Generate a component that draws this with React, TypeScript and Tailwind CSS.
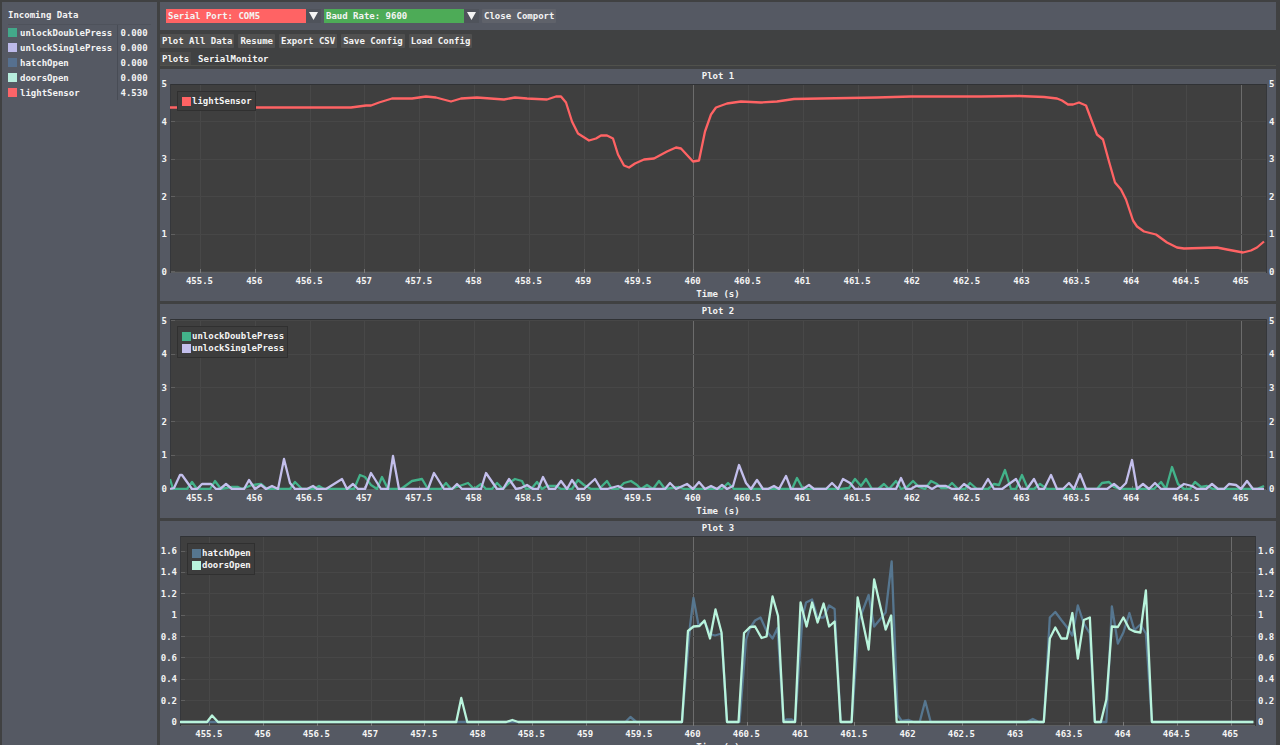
import { useState } from 'react';

type Series = { name: string; color: string; points: string };

type PlotProps = {
  title: string;
  height: number;
  start: number; // time at the left edge
  viewBox: string;
  zero: number; // y of value 0
  unit: number; // px per 1.0
  yTicks: number[];
  series: Series[];
  narrow?: boolean;
};

const GREEN = '#43b28a';
const LAVENDER = '#c3bfec';
const BLUE = '#56768f';
const MINT = '#b9f4dc';
const RED = '#ff6364';

const incoming = [
  { name: 'unlockDoublePress', value: '0.000', swatch: 'bg-[#43a88a]' },
  { name: 'unlockSinglePress', value: '0.000', swatch: 'bg-[#bdbaea]' },
  { name: 'hatchOpen', value: '0.000', swatch: 'bg-[#56708f]' },
  { name: 'doorsOpen', value: '0.000', swatch: 'bg-[#b7eddd]' },
  { name: 'lightSensor', value: '4.530', swatch: 'bg-[#fb6468]' },
];

const timeTicks = Array.from({ length: 20 }, (_, i) => 455.5 + i * 0.5);

const lightSensor =
  '0,24 181,24 196,22 201,22 209,19 222,15 242,15 256,13 266,14 281,18 291,15 307,14 334,16 345,14 357,15 377,16 386,13 391,13 396,19 402,38 408,50 419,57 426,55 431,52 437,52 443,55 448,71 454,82 459,84 465,80 474,76 484,75 497,68 506,64 511,65 523,78 529,77 535,48 541,31 546,24 557,20 571,18 591,19 607,18 624,15.5 651,15 707,14 741,13 811,13 849,12.5 874,13.5 887,15 892,17 898,21 903,21 909,19 916,22 922,38 927,51 933,56 939,78 945,99 951,106 956,116 963,137 967,143 974,148 986,151 997,159 1007,164 1014,165 1047,164 1057,166 1073,169 1081,167 1087,164 1094,158';

const unlockDouble =
  '0,159 3,169 17,169 22,162 27,169 40,169 45,161 51,169 62,167 68,167 72,169 82,165 91,164 97,169 120,169 125,162 132,169 144,169 149,166 154,169 184,169 190,155 195,157 201,165 207,169 212,157 218,169 231,169 242,161 252,159 258,169 271,169 276,163 281,169 298,163 304,169 311,164 316,169 322,169 327,163 333,169 339,163 345,159 352,161 356,169 362,168 367,162 372,169 377,166 386,166 391,169 402,169 408,160 414,165 421,169 429,169 437,161 442,169 448,169 454,163 461,161 467,165 471,169 477,165 483,169 489,161 495,169 509,167 514,169 552,169 558,163 564,169 622,169 627,158 633,169 671,169 679,168 685,159 691,166 696,159 702,169 708,169 714,164 719,169 726,161 731,169 737,167 743,161 749,167 755,169 761,161 767,164 771,168 777,168 782,163 788,169 795,169 800,163 807,169 818,169 824,164 829,165 835,150 841,169 846,169 852,155 858,169 864,169 870,164 877,169 927,169 932,163 939,162 944,167 950,169 984,169 991,162 996,169 1002,147 1008,164 1014,169 1020,169 1025,162 1031,167 1037,166 1043,169 1087,169 1094,166';

const unlockSingle =
  '0,169 4,168 10,155 12,155 22,169 27,169 32,164 41,164 46,169 50,169 56,164 62,169 74,169 79,160 85,169 91,165 96,169 102,166 108,169 114,139 120,163 125,169 137,169 143,166 147,169 156,169 172,159 177,169 183,164 188,169 195,169 201,153 211,169 218,169 223,136 229,169 258,169 264,153 274,169 282,169 287,164 292,169 311,169 316,153 327,169 333,169 339,159 346,169 351,168 357,165 363,169 368,169 373,157 379,169 385,169 391,161 397,169 402,160 408,169 414,169 425,159 431,169 437,169 448,166 454,169 495,169 500,163 506,169 517,164 523,169 529,162 535,169 541,166 547,169 552,165 557,169 563,166 569,145 576,163 581,169 587,160 593,169 598,169 604,166 609,169 616,156 621,169 633,169 639,165 644,169 656,169 662,163 668,169 673,159 680,163 685,169 726,169 731,158 736,169 741,169 746,166 757,166 762,169 767,166 776,166 782,169 789,169 794,164 801,169 812,169 818,159 824,169 832,169 846,159 851,169 857,169 864,159 869,169 874,169 881,155 887,169 893,169 899,163 904,169 910,154 916,169 937,169 944,164 950,169 956,163 962,140 967,169 973,164 979,169 985,163 991,169 1007,169 1014,164 1022,166 1027,169 1036,169 1042,164 1048,169 1054,169 1059,164 1066,165 1071,169 1077,161 1083,169 1094,169';

const hatchOpen =
  '1,186 445,186 450,181 456,186 501.5,186 509.5,90.5 513,62 518,89 524,85.5 529.5,98 534.5,99.5 541,97.5 546.5,186 559,186 565.5,104 569,93 574.5,84.5 580,81.5 586,95 592,102.5 597,92 603,186 606,183.5 611,183.5 614.5,186 622,80.5 625.5,66.5 631.5,63.5 637,81.5 643,81.5 648.5,69.5 654,73 660,186 671,186 678.5,84 688,59 693.5,90.5 705,76.5 711,25.5 717,179 721,185 728,184 733,186 739,186 744.5,165 750,186 846,186 852,183 858,186 863,186 869,81.5 874.5,76 880.5,84 886,91 891.5,99.5 897,69.5 903,87.5 909,97.5 914,186 925.5,186 931,70.5 937,107.5 942.5,96.5 948.5,77 953.5,94 959.5,88.5 965,97.5 971,186 1072,186';

const doorsOpen =
  '0,186 27,186 32,179.5 38,186 276,186 281,162 287,186 326,186 332,184 338,186 501.5,186 507.5,95 513,90.5 519,90 524,84.5 529.5,102.5 535,73.5 541,96.5 546.5,186 558,186 563.5,97 569.5,91 574.5,90.5 581,102 586,100.5 592,60.5 597.5,80 603,186 614.5,186 620,66.5 626,90.5 631.5,66.5 637,86.5 643,67.5 648.5,90.5 654,85.5 660,186 671,186 677,61.5 688,113.5 693.5,43.5 705,93.5 710.5,79.5 716,186 863,186 869,102.5 874.5,91.5 880.5,102.5 886,102.5 891.5,77 897,122.5 903,84 909,81.5 914,186 920,186 925.5,163.5 931,90.5 937,91 942.5,81.5 948.5,93 953.5,95.5 959.5,96.5 965,54.5 971,186 1072.5,186';

function Plot({ title, height, start, viewBox, zero, unit, yTicks, series, narrow }: PlotProps) {
  const xAt = (t: number) => `${(t - start) * 10}%`;

  return (
    <section className="bg-[#555963]">
      <h2 className="h-[15px] text-center leading-[15px]">{title}</h2>
      <div className={narrow ? 'pl-5 pr-[21px]' : 'px-[10px]'}>
        <div className="relative bg-[#3f3f3f]">
          <svg className="block w-full overflow-visible" height={height} aria-label={title}>
            {/* grid */}
            <g shapeRendering="crispEdges">
              {timeTicks.map((t) => (
                <line key={t} x1={xAt(t)} x2={xAt(t)} y1={0} y2={height} stroke={t % 5 === 0 ? '#6c6c6c' : '#484848'} />
              ))}
              {yTicks.map((v) => (
                <line key={v} x1="0" x2="100%" y1={zero - v * unit} y2={zero - v * unit} stroke="#474747" />
              ))}
              {yTicks.map((v) => (
                <line key={v} x1="0" x2="5" y1={zero - v * unit} y2={zero - v * unit} stroke="#606060" />
              ))}
              <line x1="0" x2="100%" y1={height - 1} y2={height - 1} stroke="#5c5e60" />
              <line x1="0" x2="100%" y1="0" y2="0" stroke="#303235" />
              <line x1="0" x2="0" y1="0" y2={height} stroke="#35373b" />
              <line x1="100%" x2="100%" y1="0" y2={height} stroke="#35373b" />
              {timeTicks.map((t) => (
                <line key={t} x1={xAt(t)} x2={xAt(t)} y1={height - 4} y2={height} stroke="#7a7a7a" />
              ))}
            </g>

            {/* axis labels */}
            <g fill="#f4f4f4">
              {timeTicks.map((t) => (
                <text key={t} x={xAt(t)} dx="-1" y={height + 11} textAnchor="middle">
                  {t}
                </text>
              ))}
              {yTicks.map((v) => (
                <g key={v}>
                  <text x="-3" y={zero - v * unit + 3} textAnchor="end">
                    {v}
                  </text>
                  <text x="100%" dx="3" y={zero - v * unit + 3}>
                    {v}
                  </text>
                </g>
              ))}
            </g>

            <svg width="100%" height={height} viewBox={viewBox} preserveAspectRatio="none">
              {series.map((s) => (
                <polyline
                  key={s.name}
                  points={s.points}
                  fill="none"
                  stroke={s.color}
                  strokeWidth="2.3"
                  strokeLinejoin="round"
                  vectorEffect="non-scaling-stroke"
                />
              ))}
            </svg>
          </svg>

          {/* legend */}
          <ul className="absolute left-[7px] top-[7px] border border-[#303030] bg-[#3d3d3d] py-[3px] pl-1 pr-[3px]">
            {series.map((s) => (
              <li key={s.name} className="flex h-3 items-center gap-px">
                <span className="size-[9px]" style={{ backgroundColor: s.color }} />
                {s.name}
              </li>
            ))}
          </ul>
        </div>
      </div>
      <p className="h-7 pt-[14px] text-center leading-[14px]">Time (s)</p>
    </section>
  );
}

function Dropdown({ label, options, color }: { label: string; options: string[]; color: string }) {
  return (
    <div className="relative w-[155px]">
      <select aria-label={label} className={`block h-[14px] w-full appearance-none px-0.5 leading-[14px] outline-none ${color}`}>
        {options.map((o) => (
          <option key={o}>{`${label}: ${o}`}</option>
        ))}
      </select>
      <span className="pointer-events-none absolute right-0 top-0 flex h-[14px] w-[15px] items-center justify-center bg-[#4f535b]">
        <svg width="9" height="8" viewBox="0 0 9 8">
          <path d="M0 0H9L4.5 8Z" fill="#f4f4f4" />
        </svg>
      </span>
    </div>
  );
}

const actions = ['Plot All Data', 'Resume', 'Export CSV', 'Save Config', 'Load Config'];

export default function App() {
  const [tab, setTab] = useState('Plots');

  return (
    <div className="flex h-screen gap-[3px] overflow-hidden bg-[#404142] pl-0.5 pr-1 pt-0.5 font-['DejaVu_Sans_Mono','Liberation_Mono',monospace] text-[9px] font-bold leading-[14px] text-[#f4f4f4]">
      <aside className="w-[155px] shrink-0 bg-[#555963] px-1.5 pt-1.5">
        <h1 className="border-b border-[#4e525b] pb-0.5">Incoming Data</h1>
        <table className="w-full">
          <tbody>
            {incoming.map((row) => (
              <tr key={row.name} className="h-[15px]">
                <th className="w-[109px] border-r border-[#484c55] p-0 text-left">
                  <span className="flex items-center gap-[3px]">
                    <span className={`size-[9px] ${row.swatch}`} />
                    {row.name}
                  </span>
                </th>
                <td className="p-0 pl-[3px]">{row.value}</td>
              </tr>
            ))}
          </tbody>
        </table>
      </aside>

      <main className="min-w-0 flex-1">
        <header className="flex h-7 items-center gap-[3px] bg-[#555963] px-1.5">
          <Dropdown label="Serial Port" options={['COM5', 'COM3']} color="bg-[#ff6364]" />
          <Dropdown label="Baud Rate" options={['9600', '115200']} color="bg-[#4dab57]" />
          <button className="rounded-[1px] bg-[#5f626a] px-0.5">Close Comport</button>
        </header>

        <div className="mt-1 flex gap-1">
          {actions.map((a) => (
            <button key={a} className="rounded-[1px] bg-[#505050] px-0.5">
              {a}
            </button>
          ))}
        </div>

        <div className="mt-1 flex h-[14px] gap-[5px] border-b border-[#50514c]" role="tablist">
          {['Plots', 'SerialMonitor'].map((t) => (
            <button
              key={t}
              role="tab"
              aria-selected={tab === t}
              onClick={() => setTab(t)}
              className={tab === t ? 'bg-[#4a4a4a] px-0.5' : 'px-0.5'}
            >
              {t}
            </button>
          ))}
        </div>

        <div className="mt-[3px] flex flex-col gap-[3px]">
          <Plot
            title="Plot 1"
            height={189}
            start={455.222}
            viewBox="0 0.5 1096 189"
            zero={187.5}
            unit={37.5}
            yTicks={[0, 1, 2, 3, 4, 5]}
            series={[{ name: 'lightSensor', color: RED, points: lightSensor }]}
          />
          <Plot
            title="Plot 2"
            height={171}
            start={455.222}
            viewBox="0 -1 1096 171"
            zero={170}
            unit={33.7}
            yTicks={[0, 1, 2, 3, 4, 5]}
            series={[
              { name: 'unlockDoublePress', color: GREEN, points: unlockDouble },
              { name: 'unlockSinglePress', color: LAVENDER, points: unlockSingle },
            ]}
          />
          <Plot
            title="Plot 3"
            height={190}
            start={455.223}
            viewBox="0 0 1074 190"
            zero={186}
            unit={106.8}
            yTicks={[0, 0.2, 0.4, 0.6, 0.8, 1, 1.2, 1.4, 1.6]}
            narrow
            series={[
              { name: 'hatchOpen', color: BLUE, points: hatchOpen },
              { name: 'doorsOpen', color: MINT, points: doorsOpen },
            ]}
          />
        </div>
      </main>
    </div>
  );
}
